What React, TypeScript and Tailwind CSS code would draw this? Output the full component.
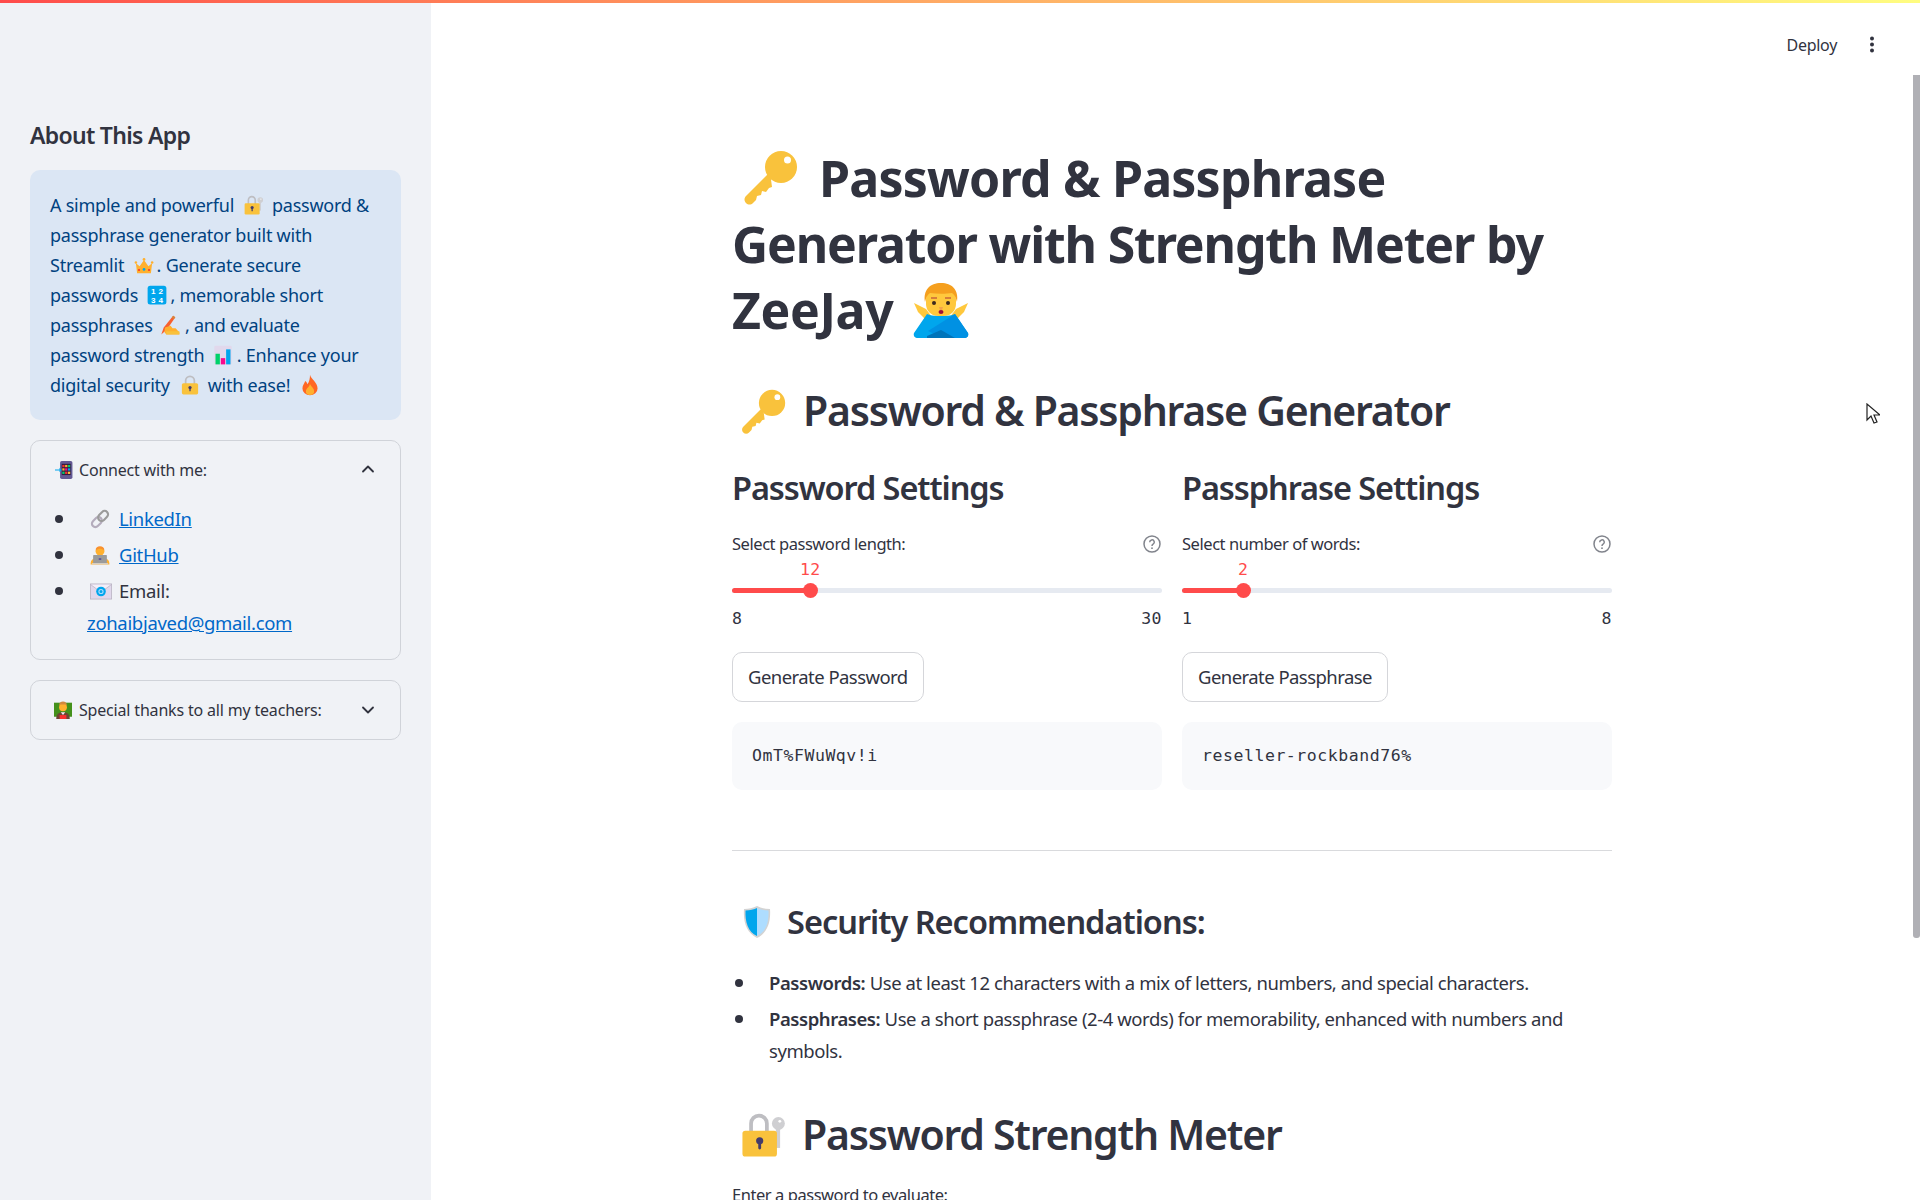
import React from 'react';
import { ChevronDown, ChevronUp } from 'lucide-react';

type EmojiProps = { className?: string };

const Key: React.FC<EmojiProps> = ({ className }) => (
  <svg viewBox="0 0 56 56" className={className}>
    <path
      fill="#F9C23C"
      d="M28 22 4 46c-2 2-2 5 0 7s5 2 7 0l3-3 1-4 4-1 1-4 4 1 3-4 3-1z"
    />
    <circle cx="39" cy="17" r="16" fill="#F9C23C" />
    <circle cx="45.5" cy="10" r="3.5" fill="#fff" />
  </svg>
);

const LockKey: React.FC<EmojiProps> = ({ className }) => (
  <svg viewBox="0 0 32 32" className={className}>
    <path d="M7 16V8a5.5 5.5 0 0 1 11 0v8" fill="none" stroke="#BEBEC2" strokeWidth="2.6" />
    <rect x="24.2" y="10" width="3" height="15" fill="#CFCFD2" />
    <circle cx="26" cy="8" r="4.5" fill="#CFCFD2" />
    <circle cx="27" cy="6.5" r="1" fill="#fff" />
    <rect x="1" y="13" width="24" height="18" rx="2" fill="#F9C23C" />
    <circle cx="13" cy="20" r="2.5" fill="#433B6B" />
    <rect x="12" y="20" width="2" height="6" rx="1" fill="#433B6B" />
  </svg>
);

const Lock: React.FC<EmojiProps> = ({ className }) => (
  <svg viewBox="0 0 32 32" className={className}>
    <path d="M9 15V9a7 7 0 0 1 14 0v6" fill="none" stroke="#BEBEC2" strokeWidth="2.8" />
    <rect x="3" y="13" width="26" height="18" rx="2.5" fill="#F9C23C" />
    <circle cx="16" cy="20" r="2.6" fill="#433B6B" />
    <rect x="15" y="20" width="2" height="6" rx="1" fill="#433B6B" />
  </svg>
);

const Crown: React.FC<EmojiProps> = ({ className }) => (
  <svg viewBox="0 0 32 32" className={className}>
    <path d="M3 13l6 5 7-10 7 10 6-5-2 16H5z" fill="#FFB02E" />
    <circle cx="3" cy="12" r="2" fill="#FFB02E" />
    <circle cx="16" cy="7" r="2.2" fill="#FFB02E" />
    <circle cx="29" cy="12" r="2" fill="#FFB02E" />
    <circle cx="16" cy="23" r="2.2" fill="#00A6ED" />
    <circle cx="8" cy="24" r="1.7" fill="#F8312F" />
    <circle cx="24" cy="24" r="1.7" fill="#F8312F" />
  </svg>
);

const Numbers: React.FC<EmojiProps> = ({ className }) => (
  <svg viewBox="0 0 32 32" className={className}>
    <rect x="1" y="1" width="30" height="30" rx="4" fill="#00A6ED" />
    <g fill="#fff" fontFamily="'Liberation Sans', sans-serif" fontWeight="700" fontSize="13" textAnchor="middle">
      <text x="10" y="14">1</text>
      <text x="22" y="14">2</text>
      <text x="10" y="28">3</text>
      <text x="22" y="28">4</text>
    </g>
  </svg>
);

const WritingHand: React.FC<EmojiProps> = ({ className }) => (
  <svg viewBox="0 0 32 32" className={className}>
    <path d="M2 31 6 20 21 1l3.500 2.500L11 23z" fill="#F8612F" />
    <path d="M21 1l3.500 2.500-2 3-3.500-2.500z" fill="#D3883E" />
    <path d="M8 20l9-3 3 4 5 0 6 7v3H10l-3-4z" fill="#FFB02E" />
    <path d="M10 26h21v5H10z" fill="#F9C23C" />
  </svg>
);

const BarChart: React.FC<EmojiProps> = ({ className }) => (
  <svg viewBox="0 0 32 32" className={className}>
    <rect x="2" y="1" width="28" height="30" rx="2" fill="#E1D8EC" />
    <rect x="4" y="14" width="7" height="17" fill="#00D26A" />
    <rect x="12.500" y="21" width="7" height="10" fill="#F70A8D" />
    <rect x="21" y="7" width="7" height="24" fill="#00A6ED" />
  </svg>
);

const Fire: React.FC<EmojiProps> = ({ className }) => (
  <svg viewBox="0 0 32 32" className={className}>
    <path d="M16 1c1 6 11 11 11 20a11 10 0 0 1-22 0c0-5 3-7 4-11 2 1 3 3 3 5 3-3 4-9 4-14z" fill="#FF6723" />
    <path d="M16 14c1 4 6 6 6 11a6 5.500 0 0 1-12 0c0-4 5-6 6-11z" fill="#FFB02E" />
  </svg>
);

const LinkIcon: React.FC<EmojiProps> = ({ className }) => (
  <svg viewBox="0 0 32 32" className={className}>
    <g fill="none" strokeWidth="3.400" transform="rotate(-45 16 16)">
      <rect x="0" y="10.500" width="18" height="11" rx="5.500" stroke="#B4ACBC" />
      <rect x="14" y="10.500" width="18" height="11" rx="5.500" stroke="#9B9B9B" />
    </g>
  </svg>
);

const Technologist: React.FC<EmojiProps> = ({ className }) => (
  <svg viewBox="0 0 32 32" className={className}>
    <path d="M1 31c0-6 2-8 6-9h18c4 1 6 3 6 9z" fill="#FFB02E" />
    <circle cx="16" cy="10" r="7" fill="#FFB02E" />
    <path d="M9 9c0-5 3-7 7-7s7 2 7 7c-2-2-5-3-7-3s-5 1-7 3z" fill="#F9912F" />
    <rect x="5" y="16" width="22" height="13" rx="1" fill="#9B9B9B" />
    <rect x="3" y="29" width="26" height="2" fill="#D3D3D3" />
    <rect x="14" y="21" width="4" height="3" fill="#635994" />
  </svg>
);

const Envelope: React.FC<EmojiProps> = ({ className }) => (
  <svg viewBox="0 0 32 24" className={className}>
    <rect x="0.500" y="1" width="31" height="22" fill="#E1D8EC" stroke="#B4ACBC" />
    <path d="M1 2l15 11L31 2" fill="#F3EEF8" stroke="#B4ACBC" />
    <circle cx="16" cy="12" r="7" fill="#00A6ED" />
    <circle cx="16" cy="12" r="3" fill="none" stroke="#AEDDFF" strokeWidth="1.600" />
  </svg>
);

const Phone: React.FC<EmojiProps> = ({ className }) => (
  <svg viewBox="0 0 32 32" className={className}>
    <rect x="9" y="0" width="22" height="32" rx="3" fill="#635994" />
    <rect x="12" y="5" width="16" height="20" fill="#321B41" />
    {[
      '#F8312F', '#FFB02E', '#00D26A',
      '#FFB02E', '#F70A8D', '#00A6ED',
      '#00D26A', '#F8312F', '#F9C23C',
    ].map((fill, i) => (
      <rect key={i} x={13 + (i % 3) * 5} y={7 + Math.floor(i / 3) * 6} width="4" height="4" fill={fill} />
    ))}
    <path d="M0 15h8v-3l4 4-4 4v-3H0z" fill="#00A6ED" />
  </svg>
);

const Teacher: React.FC<EmojiProps> = ({ className }) => (
  <svg viewBox="0 0 32 32" className={className}>
    <rect x="0" y="3" width="32" height="25" fill="#44911B" />
    <path d="M4 32c0-8 3-12 12-12s12 4 12 12z" fill="#6D4534" />
    <path d="M12 20l4 5 4-5z" fill="#F3EEF8" />
    <circle cx="16" cy="11" r="7" fill="#FFB02E" />
    <path d="M9 8c0-5 3-7 7-7s7 2 7 7l-2-2H11z" fill="#D3883E" />
    <rect x="10" y="25" width="12" height="7" fill="#F8312F" />
  </svg>
);

const Shield: React.FC<EmojiProps> = ({ className }) => (
  <svg viewBox="0 0 28 34" className={className}>
    <path d="M14 1c4 2 8 3 13 3 1 14-3 24-13 29C4 28 0 18 1 4c5 0 9-1 13-3z" fill="#D3D3D3" />
    <path d="M14 3v28C5 27 2 17 2.500 5.500 7 5.300 11 4.500 14 3z" fill="#00A6ED" />
    <path d="M14 3v28c9-4 12-14 11.500-25.500C21 5.300 17 4.500 14 3z" fill="#AEDDFF" />
  </svg>
);

const PersonNo: React.FC<EmojiProps> = ({ className }) => (
  <svg viewBox="0 0 56 56" className={className}>
    <path d="M1 21l12 6 6 8-6 3-8-8z" fill="#FFC83D" />
    <path d="M55 21l-12 6-6 8 6 3 8-8z" fill="#FFC83D" />
    <rect x="13" y="6" width="30" height="28" rx="12" fill="#FFC83D" />
    <path d="M12 20C10 8 17 1 28 1s18 7 16 19c-1-5-3-8-5-9-6 1-15 1-22 0-2 1-4 4-5 9z" fill="#F59F1E" />
    <path d="M18 16h6M32 16h6" stroke="#D67D3A" strokeWidth="2" />
    <circle cx="21" cy="21" r="2" fill="#3D2A1E" />
    <circle cx="35" cy="21" r="2" fill="#3D2A1E" />
    <path d="M26 25h4l-1 3h-2z" fill="#F4A24A" />
    <ellipse cx="28" cy="30" rx="2.500" ry="2" fill="#A01038" />
    <path d="M14 32c5 2 9 2 14 2s9 0 14-2l13 19c1 3-1 5-4 5H5c-3 0-5-2-4-5z" fill="#00A6ED" />
    <path d="M42 32l13 19c1 3-1 5-4 5H30L15 49z" fill="#0091E3" />
    <path d="M14 54l14-6 14 8H14z" fill="#0074BA" />
  </svg>
);

const HelpIcon: React.FC = () => (
  <svg viewBox="0 0 18 18" className="w-[18px] h-[18px]">
    <circle cx="9" cy="9" r="8" fill="none" stroke="#81848C" strokeWidth="1.500" />
    <path d="M6.700 7.200a2.300 2.300 0 1 1 3.400 2c-.8.500-1.100.9-1.100 1.700" fill="none" stroke="#81848C" strokeWidth="1.500" />
    <circle cx="9" cy="13.200" r="0.900" fill="#81848C" />
  </svg>
);

const Slider: React.FC<{ label: string; value: string; min: string; max: string; pct: number }> = ({ label, value, min, max, pct }) => (
  <div>
    <div className="flex items-center justify-between h-[24px] text-[16.5px] tracking-[-0.45px]">
      <span>{label}</span>
      <span className="mr-px">
        <HelpIcon />
      </span>
    </div>
    <div className="relative h-[24px] mt-[22px]">
      <div className="absolute left-0 right-0 top-[9.500px] h-[5px] rounded-full bg-[#e6eaf1]" />
      <div className="absolute left-0 top-[9.500px] h-[5px] rounded-l-full bg-[#ff4b4b]" style={{ width: `${pct}%` }} />
      <div className="absolute top-[4.500px] w-[15px] h-[15px] -ml-[7.500px] rounded-full bg-[#ff4b4b]" style={{ left: `${pct}%` }} />
      <div
        className="absolute -top-[18px] -translate-x-1/2 leading-[20px] text-[16.500px] text-[#ff4b4b] font-['DejaVu_Sans_Mono',monospace] tracking-[0.4px]"
        style={{ left: `${pct}%` }}
      >
        {value}
      </div>
    </div>
    <div className="flex justify-between mt-[7px] h-[19px] leading-[20px] text-[16.500px] font-['DejaVu_Sans_Mono',monospace] tracking-[0.5px]">
      <span>{min}</span>
      <span>{max}</span>
    </div>
  </div>
);

const SettingsColumn: React.FC<{
  title: string;
  button: string;
  code: string;
  slider: { label: string; value: string; min: string; max: string; pct: number };
}> = ({ title, button, code, slider }) => (
  <div className="flex-1 min-w-0">
    <h3 className="text-[32.500px] leading-[42px] font-semibold tracking-[-1.08px]">{title}</h3>
    <div className="mt-[23px]">
      <Slider {...slider} />
    </div>
    <button className="block mt-[24px] h-[50px] px-[15px] border border-[#d5d6da] rounded-[10px] bg-white text-[18.500px] tracking-[-0.55px]">
      {button}
    </button>
    <div className="mt-[20px] h-[68px] flex items-center px-[20px] rounded-[10px] bg-[#f8f9fb] text-[16.500px] font-['DejaVu_Sans_Mono',monospace] tracking-[0.55px]">
      {code}
    </div>
  </div>
);

const App: React.FC = () => {
  return (
    <div className="relative h-screen w-full flex overflow-hidden bg-white text-[#31333f] font-['Noto_Sans',sans-serif]">
      <div className="absolute top-0 left-0 right-0 h-[3px] z-10 bg-gradient-to-r from-[#ff4b4b] to-[#fffd80]" />

      <aside className="w-[431px] shrink-0 bg-[#f0f2f6] px-[30px] pt-[117px]">
        <h3 className="text-[23px] leading-[36px] font-semibold tracking-[-0.7px]">About This App</h3>
        <div className="mt-[17px] h-[250px] rounded-[10px] bg-[#dbe6f4] pl-[20px] pt-[20px] text-[#004280] text-[18px] leading-[30px] tracking-[-0.24px] whitespace-nowrap">
          A simple and powerful <LockKey className="inline-block w-[20px] h-[20px] ml-[5px] mr-[4px] -mt-[4px]" /> password &amp;
          <br />
          passphrase generator built with
          <br />
          Streamlit <Crown className="inline-block w-[20px] h-[20px] ml-[5px] mr-[3px] -mt-[4px]" />. Generate secure
          <br />
          passwords <Numbers className="inline-block w-[20px] h-[20px] ml-[4px] mr-[4px] -mt-[4px]" />, memorable short
          <br />
          passphrases <WritingHand className="inline-block w-[20px] h-[20px] ml-[3px] mr-[5px] -mt-[4px]" />, and evaluate
          <br />
          password strength <BarChart className="inline-block w-[20px] h-[20px] ml-[4px] mr-[4px] -mt-[4px]" />. Enhance your
          <br />
          digital security <Lock className="inline-block w-[20px] h-[20px] ml-[6px] mr-[3px] -mt-[4px]" /> with ease! <Fire className="inline-block w-[22px] h-[22px] ml-[4px] -mt-[4px]" />
        </div>

        <div className="mt-[20px] h-[220px] rounded-[10px] border border-[#d0d3d9]">
          <div className="flex items-center justify-between h-[58px] pl-[24px] pr-[22px] text-[16px] tracking-[-0.2px]">
            <span className="flex items-center gap-[6px]">
              <Phone className="w-[18px] h-[18px]" />
              Connect with me:
            </span>
            <ChevronUp className="w-[20px] h-[20px] -mt-[2px]" strokeWidth={2.2} />
          </div>
          <ul className="mt-[2px] text-[18.500px] tracking-[-0.32px] leading-[36px] pl-[57px] whitespace-nowrap">
            <li className="relative flex items-center h-[36px] gap-[9px]">
              <span className="absolute -left-[33px] w-[8px] h-[8px] rounded-full bg-[#31333f]" />
              <LinkIcon className="w-[20px] h-[20px] ml-[2px]" />
              <a className="underline text-[#0068c9]">LinkedIn</a>
            </li>
            <li className="relative flex items-center h-[36px] gap-[9px]">
              <span className="absolute -left-[33px] w-[8px] h-[8px] rounded-full bg-[#31333f]" />
              <Technologist className="w-[20px] h-[20px] ml-[2px]" />
              <a className="underline text-[#0068c9]">GitHub</a>
            </li>
            <li className="relative flex items-center h-[36px] gap-[7px]">
              <span className="absolute -left-[33px] w-[8px] h-[8px] rounded-full bg-[#31333f]" />
              <Envelope className="w-[22px] h-[17px] ml-[2px]" />
              Email:
            </li>
            <li className="h-[28px] leading-[28px] -ml-[1px]">
              <a className="underline text-[#0068c9]">zohaibjaved@gmail.com</a>
            </li>
          </ul>
        </div>

        <div className="mt-[20px] h-[60px] rounded-[10px] border border-[#d0d3d9] flex items-center justify-between pl-[23px] pr-[22px] text-[16px] tracking-[-0.18px]">
          <span className="flex items-center gap-[7px]">
            <Teacher className="w-[18px] h-[18px]" />
            Special thanks to all my teachers:
          </span>
          <ChevronDown className="w-[20px] h-[20px]" strokeWidth={2.2} />
        </div>
      </aside>

      <main className="relative flex-1 min-w-0 pr-[7px]">
        <div className="absolute top-[30px] right-[45px] flex items-center gap-[32px]">
          <span className="text-[16px] leading-[30px] tracking-[-0.3px]">Deploy</span>
          <svg viewBox="0 0 6 20" className="w-[6px] h-[20px]" fill="#31333f">
            <circle cx="3" cy="3.500" r="2" />
            <circle cx="3" cy="9.500" r="2" />
            <circle cx="3" cy="15.500" r="2" />
          </svg>
        </div>

        <div className="w-[880px] mx-auto pt-[145px]">
          <h1 className="text-[50px] leading-[66px] font-bold whitespace-nowrap">
            <Key className="inline-block w-[56px] h-[56px] ml-[10px] mr-[21px] -mt-[11px]" />
            <span className="tracking-[-0.8px]">Password &amp; Passphrase</span>
            <br />
            <span className="tracking-[-1.15px]">Generator with Strength Meter by</span>
            <br />
            <span className="tracking-[-0.4px]">ZeeJay</span> <PersonNo className="inline-block w-[56px] h-[56px] ml-[7px] -mt-[10px]" />
          </h1>

          <h2 className="mt-[40px] text-[41px] leading-[54px] font-semibold tracking-[-1.25px] whitespace-nowrap">
            <Key className="inline-block w-[46px] h-[46px] ml-[8px] mr-[17px] -mt-[6px]" />
            Password &amp; Passphrase Generator
          </h2>

          <div className="mt-[30px] flex gap-[20px]">
            <SettingsColumn
              title="Password Settings"
              button="Generate Password"
              code="OmT%FWuWqv!i"
              slider={{ label: 'Select password length:', value: '12', min: '8', max: '30', pct: 18.2 }}
            />
            <SettingsColumn
              title="Passphrase Settings"
              button="Generate Passphrase"
              code="reseller-rockband76%"
              slider={{ label: 'Select number of words:', value: '2', min: '1', max: '8', pct: 14.2 }}
            />
          </div>

          <hr className="mt-[60px] border-t border-[#d9dadd]" />

          <h3 className="mt-[50px] text-[32.500px] leading-[42px] font-semibold tracking-[-1px] whitespace-nowrap">
            <Shield className="inline-block w-[28px] h-[34px] ml-[11px] mr-[16px] -mt-[6px]" />
            Security Recommendations:
          </h3>

          <ul className="mt-[24px] text-[18.500px] leading-[32px] tracking-[-0.44px]">
            <li className="relative pl-[37px]">
              <span className="absolute left-[3px] top-[12px] w-[8px] h-[8px] rounded-full bg-[#31333f]" />
              <strong className="font-semibold">Passwords:</strong> Use at least 12 characters with a mix of letters, numbers, and special characters.
            </li>
            <li className="relative pl-[37px] mt-[4px]">
              <span className="absolute left-[3px] top-[12px] w-[8px] h-[8px] rounded-full bg-[#31333f]" />
              <strong className="font-semibold">Passphrases:</strong> Use a short passphrase (2-4 words) for memorability, enhanced with numbers and
              <br />
              symbols.
            </li>
          </ul>

          <h2 className="mt-[40px] text-[41px] leading-[54px] font-semibold tracking-[-1.25px] whitespace-nowrap">
            <LockKey className="inline-block w-[46px] h-[46px] ml-[9px] mr-[15px] -mt-[8px]" />
            Password Strength Meter
          </h2>

          <div className="mt-[22px] text-[16.500px] leading-[24px] tracking-[-0.45px]">Enter a password to evaluate:</div>
        </div>

        <div className="absolute top-[75px] right-0 w-[7px] h-[863px] rounded-b-[3px] bg-[#b0b0b5]" />
        <svg viewBox="0 0 14 22" className="absolute top-[403px] left-[1435px] w-[14px] h-[22px]">
          <path d="M1 1v16l4-4 3 7 3-1-3-7h6z" fill="#fff" stroke="#222" strokeWidth="1.200" />
        </svg>
      </main>
    </div>
  );
};

export default App;
